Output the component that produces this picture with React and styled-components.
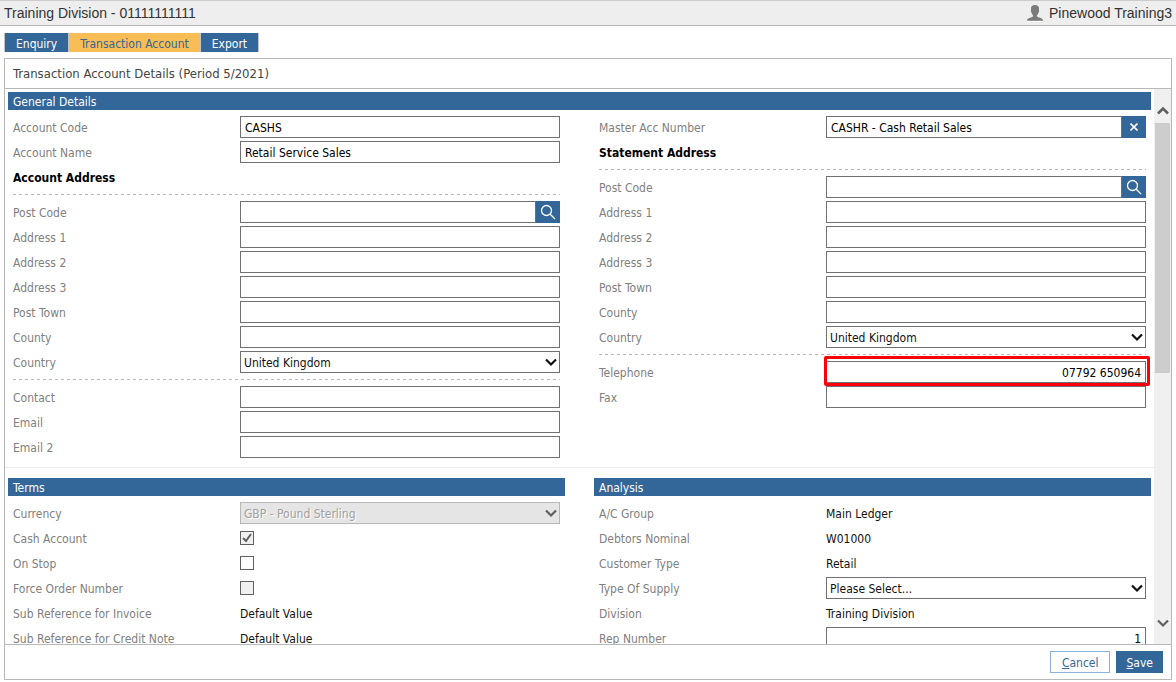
import { useId } from 'react'
import styled, { createGlobalStyle } from 'styled-components'

const GlobalStyle = createGlobalStyle`
    * {
        box-sizing: border-box;
    }
    body {
        margin: 0;
        background: #ffffff;
        font-family: 'DejaVu Sans Condensed', 'DejaVu Sans', sans-serif;
        font-size: 12px;
        line-height: 16px;
        color: #111111;
    }
    button,
    input,
    select {
        font: inherit;
        color: inherit;
        margin: 0;
    }
`
const Page = styled.div`
    display: flex;
    flex-direction: column;
    height: 100vh;
    padding-bottom: 2px;
`
const TopBar = styled.header`
    display: flex;
    align-items: center;
    justify-content: space-between;
    height: 26px;
    flex: none;
    padding: 0 4px;
    background: #eeeeee;
    border-top: 1px solid #cccccc;
    border-bottom: 1px solid #b8b8b8;
    font-family: 'Liberation Sans', Arial, sans-serif;
    font-size: 14px;
    color: #333333;
`
const User = styled.div`
    display: flex;
    align-items: center;
    gap: 6px;
`
const Tabs = styled.nav`
    display: flex;
    flex: none;
    align-self: flex-start;
    gap: 1px;
    margin: 7px 4px 6px;
    padding: 0 1px;
    background: #c4c4c4;
`
const Tab = styled.button`
    height: 19px;
    padding: 2px 11px 0;
    border: 0;
    background: ${({ $active }) => ($active ? '#f9bd55' : '#336699')};
    color: ${({ $active }) => ($active ? '#336699' : '#ffffff')};
`
const Panel = styled.main`
    display: flex;
    flex-direction: column;
    flex: 1;
    min-height: 0;
    margin: 0 4px;
    border: 1px solid #b8b8b8;
`
const PanelTitle = styled.h1`
    flex: none;
    margin: 0;
    padding: 0 8px;
    border-bottom: 1px solid #b8b8b8;
    font-size: 13px;
    font-weight: normal;
    line-height: 29px;
    color: #444444;
`
const Viewport = styled.div`
    display: flex;
    flex: 1;
    min-height: 0;
`
const Content = styled.div`
    flex: 1;
    overflow-y: auto;
    scrollbar-width: none;
    padding: 3px 0;
`
const ScrollBar = styled.div`
    display: flex;
    flex-direction: column;
    width: 17px;
    padding: 13px 1px;
    background: #f0f0f0;
    color: #606060;
`
const ScrollArrow = styled.div`
    display: flex;
    align-items: center;
    justify-content: center;
    height: 17px;
`
const ScrollTrack = styled.div`
    flex: 1;
    padding-top: 4px;
`
const ScrollThumb = styled.div`
    height: 51%;
    background: #cdcdcd;
`
const Section = styled.section`
    padding: 0 3px;
`
const Separator = styled.hr`
    margin: 9px 0 10px;
    border: 0;
    border-top: 1px solid #ebebeb;
`
const Columns = styled.div`
    display: grid;
    grid-template-columns: 1fr 1fr;
    gap: 29px;
`
const SectionTitle = styled.h2`
    height: 18px;
    margin: 0;
    padding: 0 5px;
    background: #336699;
    color: #ffffff;
    font-size: 12px;
    font-weight: normal;
    line-height: 20px;
`
const Fields = styled.div`
    display: flex;
    flex-direction: column;
    gap: 3px;
    padding: 6px 5px 0;
`
const Row = styled.div`
    display: grid;
    grid-template-columns: 227px 1fr;
    align-items: center;
    height: 22px;
`
const Label = styled.label`
    padding-top: 2px;
    color: #808080;
`
const Value = styled.span`
    padding-top: 2px;
`
const Control = styled.div`
    position: relative;
    display: flex;
    align-items: center;
    height: 22px;
`
const SubHeading = styled.h3`
    height: 22px;
    margin: 0;
    color: #000000;
    font-size: 12px;
    line-height: 24px;
`
const Divider = styled.hr`
    width: 100%;
    height: 1px;
    margin: 3px 0;
    border: 0;
    background: repeating-linear-gradient(90deg, #b8b8b8 0 3px, transparent 3px 6px);
`
const TextInput = styled.input`
    flex: 1;
    min-width: 0;
    height: 22px;
    padding: 2px 4px 0;
    border: 1px solid #707070;
    border-radius: 0;
    background: #ffffff;
    color: #000000;
    text-align: ${({ $align }) => $align || 'left'};
`
const IconButton = styled.button`
    display: flex;
    align-items: center;
    justify-content: center;
    width: 24px;
    height: 22px;
    padding: 0;
    border: 0;
    background: #336699;
    color: #ffffff;
`
const SelectInput = styled.select`
    appearance: none;
    width: 100%;
    height: 22px;
    padding: 2px 3px 0;
    border: 1px solid #707070;
    border-radius: 0;
    background: #ffffff;

    &:disabled {
        border-color: #b8b8b8;
        background: #e5e5e5;
        color: #a0a0a0;
        opacity: 1;
        text-shadow: 1px 1px #ffffff;
    }
`
const SelectArrow = styled.span`
    position: absolute;
    top: 6px;
    right: 3px;
    display: flex;
    color: ${({ $disabled }) => ($disabled ? '#606060' : '#111111')};
    pointer-events: none;
`
const CheckInput = styled.input`
    appearance: none;
    width: 14px;
    height: 14px;
    border: 1px solid #606060;
    background: #ffffff;

    &:disabled {
        background: #f0f0f0;
    }
`
const CheckMark = styled.svg`
    position: absolute;
    top: 4px;
    left: 0;
    pointer-events: none;
`
const Highlight = styled.span`
    position: absolute;
    inset: -5px -4px -3px -2px;
    border: 3px solid #fb0007;
    border-radius: 2px;
    pointer-events: none;
`
const Footer = styled.footer`
    display: flex;
    flex: none;
    justify-content: flex-end;
    gap: 6px;
    padding: 6px 8px;
    border-top: 1px solid #b8b8b8;
`
const Button = styled.button`
    height: 22px;
    padding: 2px ${({ $primary }) => ($primary ? '9px' : '11px')} 0;
    border: 1px solid ${({ $primary }) => ($primary ? '#336699' : '#8db2dd')};
    background: ${({ $primary }) => ($primary ? '#336699' : '#ffffff')};
    color: ${({ $primary }) => ($primary ? '#ffffff' : '#336699')};
`

function Chevron({ up }) {
    return (
        <svg width="12" height="10" viewBox="0 0 12 10" fill="none" stroke="currentColor" strokeWidth={up ? 2.6 : 2.2}>
            <path d={up ? 'M1 7.500 6 2.500l5 5' : 'M1 2.500l5 5 5-5'} />
        </svg>
    )
}

function SearchIcon() {
    return (
        <svg width="16" height="16" viewBox="0 0 16 16" fill="none" stroke="currentColor" strokeWidth="1.3">
            <circle cx="6.500" cy="6.500" r="5" />
            <path d="M10 10l5 5" />
        </svg>
    )
}

function ClearIcon() {
    return (
        <svg width="8" height="8" viewBox="0 0 8 8" fill="none" stroke="currentColor" strokeWidth="1.600">
            <path d="M.5.5l7 7M7.500.5l-7 7" />
        </svg>
    )
}

function UserIcon() {
    return (
        <svg width="16" height="17" viewBox="0 0 16 17" fill="#7b7b7b">
            <path d="M8 0c2.600 0 4 1.300 4 3.500 0 .7-.1 1.200-.2 1.700.5.100.5 1.400-.2 2-.3 1.300-.8 2.200-1.500 2.900v1.400c.8 1 2.500 1 4.100 1.700 1.300.6 1.800 1.500 1.800 2.600H0c0-1.100.5-2 1.800-2.600 1.600-.7 3.300-.7 4.100-1.700v-1.400C5.200 9.400 4.700 8.500 4.400 7.200c-.7-.6-.7-1.900-.2-2C4.100 4.700 4 4.200 4 3.500 4 1.300 5.400 0 8 0z" />
            <path d="M0 16h16v1H0z" fill="#ffffff" />
        </svg>
    )
}

function TextField({ label, value = '', align, icon, highlight }) {
    const id = useId()
    return (
        <Row>
            <Label htmlFor={id}>{label}</Label>
            <Control>
                <TextInput id={id} defaultValue={value} $align={align} />
                {icon === 'search' && <IconButton aria-label="Search"><SearchIcon /></IconButton>}
                {icon === 'clear' && <IconButton aria-label="Clear"><ClearIcon /></IconButton>}
                {highlight && <Highlight />}
            </Control>
        </Row>
    )
}

function SelectField({ label, value, disabled }) {
    const id = useId()
    return (
        <Row>
            <Label htmlFor={id}>{label}</Label>
            <Control>
                <SelectInput id={id} disabled={disabled}>
                    <option>{value}</option>
                </SelectInput>
                <SelectArrow $disabled={disabled}><Chevron /></SelectArrow>
            </Control>
        </Row>
    )
}

function CheckField({ label, checked, disabled }) {
    const id = useId()
    return (
        <Row>
            <Label htmlFor={id}>{label}</Label>
            <Control>
                <CheckInput type="checkbox" id={id} defaultChecked={checked} disabled={disabled} />
                {checked && (
                    <CheckMark width="14" height="14" viewBox="0 0 14 14" fill="none" stroke="#606060" strokeWidth="2">
                        <path d="M3 7l3 3 5-7" />
                    </CheckMark>
                )}
            </Control>
        </Row>
    )
}

function ValueField({ label, value }) {
    return (
        <Row>
            <Label as="span">{label}</Label>
            <Value>{value}</Value>
        </Row>
    )
}

function AddressFields() {
    return (
        <>
            <Divider />
            <TextField label="Post Code" icon="search" />
            <TextField label="Address 1" />
            <TextField label="Address 2" />
            <TextField label="Address 3" />
            <TextField label="Post Town" />
            <TextField label="County" />
            <SelectField label="Country" value="United Kingdom" />
            <Divider />
        </>
    )
}

function App() {
    return (
        <Page>
            <GlobalStyle />
            <TopBar>
                <span>Training Division - 01111111111</span>
                <User>
                    <UserIcon />
                    Pinewood Training3
                </User>
            </TopBar>
            <Tabs>
                <Tab>Enquiry</Tab>
                <Tab $active>Transaction Account</Tab>
                <Tab>Export</Tab>
            </Tabs>
            <Panel>
                <PanelTitle>Transaction Account Details (Period 5/2021)</PanelTitle>
                <Viewport>
                    <Content>
                        <Section>
                            <SectionTitle>General Details</SectionTitle>
                            <Columns>
                                <Fields>
                                    <TextField label="Account Code" value="CASHS" />
                                    <TextField label="Account Name" value="Retail Service Sales" />
                                    <SubHeading>Account Address</SubHeading>
                                    <AddressFields />
                                    <TextField label="Contact" />
                                    <TextField label="Email" />
                                    <TextField label="Email 2" />
                                </Fields>
                                <Fields>
                                    <TextField label="Master Acc Number" value="CASHR - Cash Retail Sales" icon="clear" />
                                    <SubHeading>Statement Address</SubHeading>
                                    <AddressFields />
                                    <TextField label="Telephone" value="07792 650964" align="right" highlight />
                                    <TextField label="Fax" />
                                </Fields>
                            </Columns>
                        </Section>
                        <Separator />
                        <Section>
                            <Columns>
                                <div>
                                    <SectionTitle>Terms</SectionTitle>
                                    <Fields>
                                        <SelectField label="Currency" value="GBP - Pound Sterling" disabled />
                                        <CheckField label="Cash Account" checked disabled />
                                        <CheckField label="On Stop" />
                                        <CheckField label="Force Order Number" disabled />
                                        <ValueField label="Sub Reference for Invoice" value="Default Value" />
                                        <ValueField label="Sub Reference for Credit Note" value="Default Value" />
                                    </Fields>
                                </div>
                                <div>
                                    <SectionTitle>Analysis</SectionTitle>
                                    <Fields>
                                        <ValueField label="A/C Group" value="Main Ledger" />
                                        <ValueField label="Debtors Nominal" value="W01000" />
                                        <ValueField label="Customer Type" value="Retail" />
                                        <SelectField label="Type Of Supply" value="Please Select..." />
                                        <ValueField label="Division" value="Training Division" />
                                        <TextField label="Rep Number" value="1" align="right" />
                                    </Fields>
                                </div>
                            </Columns>
                        </Section>
                    </Content>
                    <ScrollBar>
                        <ScrollArrow><Chevron up /></ScrollArrow>
                        <ScrollTrack><ScrollThumb /></ScrollTrack>
                        <ScrollArrow><Chevron /></ScrollArrow>
                    </ScrollBar>
                </Viewport>
                <Footer>
                    <Button><u>C</u>ancel</Button>
                    <Button $primary><u>S</u>ave</Button>
                </Footer>
            </Panel>
        </Page>
    )
}

export default App
